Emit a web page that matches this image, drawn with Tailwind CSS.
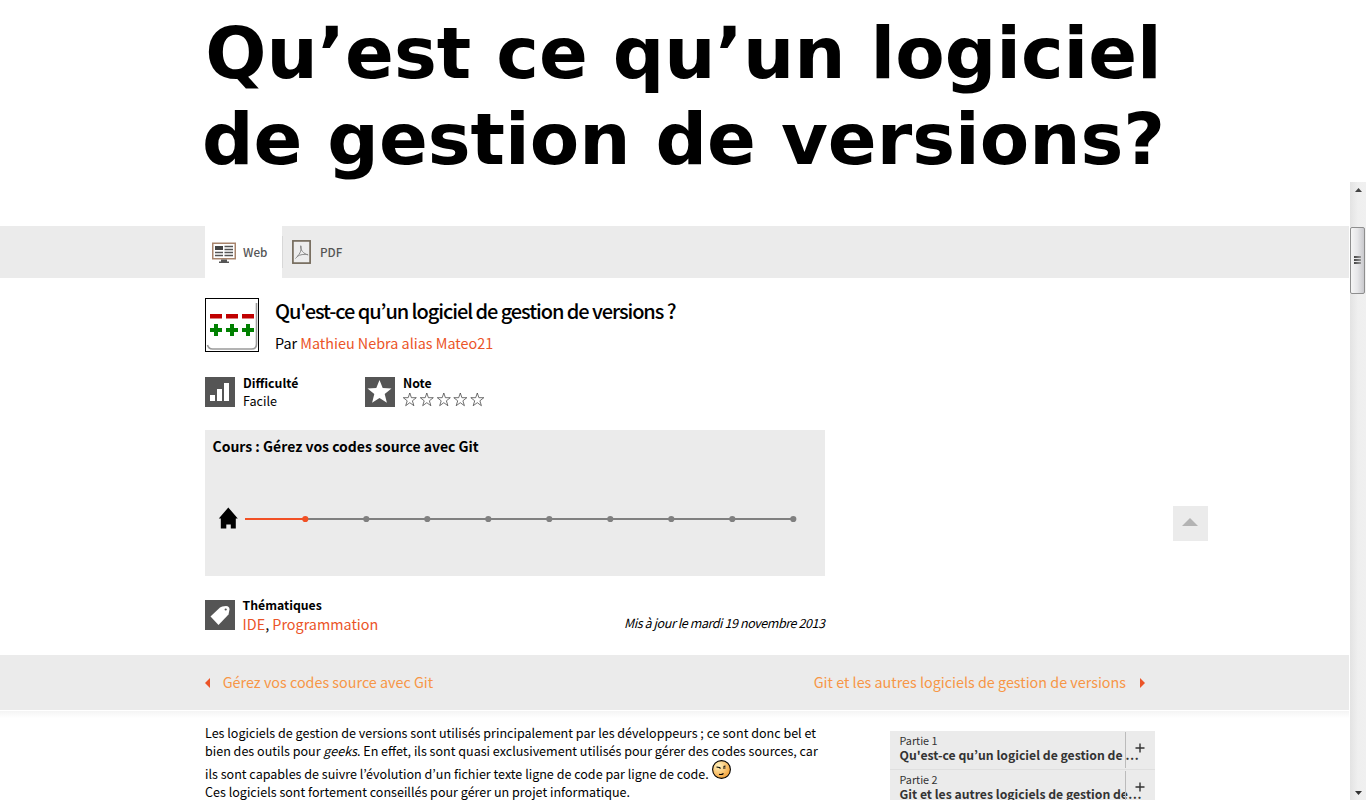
<!DOCTYPE html>
<html lang="fr">
<head>
<meta charset="utf-8">
<title>Qu’est ce qu’un logiciel de gestion de versions?</title>
<script src="https://cdn.jsdelivr.net/npm/@tailwindcss/browser@4"></script>
</head>
<body class="h-[800px] overflow-hidden bg-white text-black font-['Noto_Sans_CJK_KR','Noto_Sans',sans-serif]">
<h1 class="h-[182px] pt-[10px] pl-[1px] text-center font-['DejaVu_Sans',sans-serif] text-[72px] leading-[86px] font-bold whitespace-nowrap">Qu’est ce qu’un logiciel<br>de gestion de versions?</h1>
<div class="flex h-[618px]">
  <div class="w-[1349px] overflow-hidden">
    <nav class="mt-[44px] flex h-[52px] bg-[#ebebeb] pl-[205px] text-[11.7px] font-medium text-[#555]">
      <div class="flex w-[77px] items-center bg-white pl-[7px]">
        <svg class="h-[22px] w-[24px]" viewBox="0 0 24 22"><rect x=".75" y="2.250" width="22.5" height="15.5" fill="#fff" stroke="#a8846c" stroke-width="1.5"/><path d="M3 5h8v4H3z" fill="#444"/><path d="M12.500 5.500H21M12.500 8.500H21M3 11.500h8M12.500 11.500H21M3 14.500h8M12.500 14.500H21" stroke="#555" stroke-width="1.300"/><path d="M9 18.500h6v2h2V22H7v-1.500h2z" fill="#555"/></svg>
        <span class="ml-[7px]">Web</span>
      </div>
      <div class="mt-[10px] flex h-[32px] items-center pl-[9px] shadow-[inset_1px_0_#d8d8d8]">
        <svg class="ml-px h-[24px] w-[19px]" viewBox="0 0 19 24"><rect x=".9" y=".9" width="17.2" height="22.2" fill="#ededed" stroke="#756b5c" stroke-width="1.700"/><path d="M8.700 5.500c-1 4 3 8.500 7.500 9.500M9 6c1 5-2 9-5.500 12.500M5 16.500c3-2 7-2.500 11-2" fill="none" stroke="#8a8a8a" stroke-width="1"/></svg>
        <span class="ml-[9px]">PDF</span>
      </div>
    </nav>
    <header class="ml-[205px] w-[621px] pt-[20px]">
      <div class="flex">
        <svg class="h-[54px] w-[54px]" viewBox="0 0 54 54"><rect x=".5" y=".5" width="53" height="53" fill="#fff" stroke="#000"/><path d="M2.500 47q1 4 5 4h39q5 0 5-5V5" fill="none" stroke="#9a9a9a" stroke-width="1.600"/><path d="M5 16h12v4.500H5zM21 16h12v4.500H21zM37 16h12v4.500H37z" fill="#c00000"/><path d="M5 32h12M11 26v12M21 32h12M27 26v12M37 32h12M43 26v12" stroke="#008000" stroke-width="4"/></svg>
        <div class="ml-4 whitespace-nowrap">
          <h2 class="pt-px text-[20px] leading-[24px] font-medium tracking-[-1.07px]">Qu'est-ce qu’un logiciel de gestion de versions ?</h2>
          <p class="mt-[11px] text-[14.38px] leading-[18px]">Par <a class="text-[#eb5428]">Mathieu Nebra alias Mateo21</a></p>
        </div>
      </div>
      <div class="mt-[25px] flex h-[30px] text-[12.3px] leading-[18px]">
        <svg class="h-[30px] w-[30px] bg-[#555]" viewBox="0 0 30 30"><path d="M5 18h5v6H5zM12 12h5v12h-5zM19 6h5v18h-5z" fill="#fff"/></svg>
        <div class="-mt-[3px] ml-2 w-[122px]"><p class="font-bold">Difficulté</p><p class="text-[12.6px]">Facile</p></div>
        <svg class="h-[30px] w-[30px] bg-[#555]" viewBox="0 0 30 30"><path d="M14.500 3l3.200 8 8.800.6-6.800 5.500 2.200 8.700-7.400-4.800-7.400 4.800 2.200-8.700L2.500 11.600l8.800-.6z" fill="#fff"/></svg>
        <div class="-mt-[3px] ml-2"><p class="font-bold">Note</p>
          <svg class="h-[15px] w-[84px]" viewBox="0 0 84 15"><defs><path id="star" d="M6.800 1l1.600 4.700h4.900L9.400 8.800l1.500 4.900-4.100-3-4.100 3 1.500-4.900L.3 5.700h4.900z" fill="#fff" stroke="#333" stroke-width=".7"/></defs><use href="#star"/><use href="#star" x="17"/><use href="#star" x="34"/><use href="#star" x="50.500"/><use href="#star" x="67.500"/></svg>
        </div>
      </div>
      <section class="mt-[23px] h-[146px] w-[620px] bg-[#ebebeb] pt-[7px]">
        <h3 class="pl-[7.500px] text-[13.98px] leading-[18px] font-bold">Cours : Gérez vos codes source avec Git</h3>
        <svg class="mt-[45px] h-[40px] w-[620px]" viewBox="0 0 620 40"><path d="M23.300 7.500l9.500 11h-2V28.500h-5v-4h-4.500v4h-5.500v-10h-2z" fill="#000"/><path d="M100 19h488" stroke="#808080" stroke-width="2"/><path d="M40 19h60" stroke="#f15025" stroke-width="2"/><circle cx="100.300" cy="19" r="3.100" fill="#f15025"/><g fill="#808080"><circle cx="161.300" cy="19" r="3.100"/><circle cx="222.300" cy="19" r="3.100"/><circle cx="283.300" cy="19" r="3.100"/><circle cx="344.300" cy="19" r="3.100"/><circle cx="405.300" cy="19" r="3.100"/><circle cx="466.300" cy="19" r="3.100"/><circle cx="527.300" cy="19" r="3.100"/><circle cx="588.300" cy="19" r="3.100"/></g></svg>
      </section>
      <div class="mt-[24px] flex h-[30px]">
        <svg class="h-[30px] w-[30px] bg-[#555]" viewBox="0 0 30 30"><path d="M5.500 16.500L15 7.500q1.500-1.300 6-1.500 3.500 0 3.500 3.500l-1 5L13.500 25z" fill="#fff"/><circle cx="20.700" cy="9.500" r="1.100" fill="#555"/></svg>
        <div class="-mt-[4px] ml-[7.600px]"><p class="text-[12.25px] leading-[18px] font-bold">Thématiques</p><p class="mt-px text-[14.36px] leading-[18px]"><a class="text-[#eb5428]">IDE</a>, <a class="text-[#eb5428]">Programmation</a></p></div>
        <p class="mt-[14px] mr-[1.500px] ml-auto text-[12.5px] leading-[18px] tracking-[-0.420px] italic">Mis à jour le mardi 19 novembre 2013</p>
      </div>
    </header>
    <nav class="mt-[25px] flex h-[55px] items-center bg-[#ebebeb] pr-[204px] pl-[205px] text-[14.350px] text-[#f79646]">
      <svg class="h-[10px] w-[5px]" viewBox="0 0 5 10"><path d="M5 0v10L0 5z" fill="#eb5428"/></svg>
      <a class="-mt-[2px] ml-[12.700px] leading-[20px]">Gérez vos codes source avec Git</a>
      <a class="-mt-[2px] ml-auto leading-[20px]">Git et les autres logiciels de gestion de versions</a>
      <svg class="ml-[14px] h-[10px] w-[5px]" viewBox="0 0 5 10"><path d="M0 0v10l5-5z" fill="#eb5428"/></svg>
    </nav>
    <div class="mt-px h-[7px] bg-linear-to-b from-[#f4f4f4] to-white"></div>
    <div class="flex pl-[205px]">
      <main class="mt-[6px] w-[685px] text-[12.560px] leading-[18px] whitespace-nowrap">
        <p>Les logiciels de gestion de versions sont utilisés principalement par les développeurs ; ce sont donc bel et</p>
        <p>bien des outils pour <em>geeks</em>. En effet, ils sont quasi exclusivement utilisés pour gérer des codes sources, car</p>
        <p class="mt-[5px] flex h-[18px]">ils sont capables de suivre l’évolution d’un fichier texte ligne de code par ligne de code.
          <svg class="-mt-[5px] ml-[3px] h-[19px] w-[19px]" viewBox="0 0 19 19"><defs><radialGradient id="face" cx=".35" cy=".3" r=".75"><stop offset="0" stop-color="#fff3c0"/><stop offset="1" stop-color="#f5a035"/></radialGradient></defs><circle cx="9.500" cy="9.500" r="8.900" fill="url(#face)" stroke="#000" stroke-width="1.100"/><path d="M4.500 7l3 .5 1 1M11 8h2.500M11.500 6.500l2-.5M7 14.300q2.500.8 4.500-.8" fill="none" stroke="#000" stroke-width="1.100"/></svg></p>
        <p>Ces logiciels sont fortement conseillés pour gérer un projet informatique.</p>
      </main>
      <aside class="mt-[13px] w-[265px] text-[#333] whitespace-nowrap">
        <div class="relative h-[39px] border-b-[1px] border-[#dfdfdf] bg-[#ebebeb] pt-[3px] pl-[9.500px]"><p class="-mt-px text-[10.8px] leading-[14px]">Partie 1</p><p class="mt-px text-[12.23px] leading-[14px] font-bold">Qu'est-ce qu’un logiciel de gestion de …</p><i class="absolute top-px right-[29px] h-[36px] w-px bg-[#bbb]"></i><svg class="absolute top-[12px] right-[10px] h-[10px] w-[10px]" viewBox="0 0 10 10"><path d="M.5 5h9M5 .5v9" stroke="#333" stroke-width="1.400"/></svg></div>
        <div class="relative h-[39px] bg-[#ebebeb] pt-[3px] pl-[9.500px]"><p class="-mt-px text-[10.8px] leading-[14px]">Partie 2</p><p class="mt-px text-[12.23px] leading-[14px] font-bold">Git et les autres logiciels de gestion de…</p><i class="absolute top-px right-[29px] h-[36px] w-px bg-[#bbb]"></i><svg class="absolute top-[12px] right-[10px] h-[10px] w-[10px]" viewBox="0 0 10 10"><path d="M.5 5h9M5 .5v9" stroke="#333" stroke-width="1.400"/></svg></div>
      </aside>
    </div>
  </div>
  <div class="ml-px flex w-[16px] flex-col bg-linear-to-r from-[#e3e3e3] via-[#efefef] to-[#f0f0f0]">
    <svg class="mt-[6px] ml-[5px] h-[4px] w-[7px]" viewBox="0 0 7 4"><path d="M3.500 0L7 4H0z" fill="#444"/></svg>
    <div class="mt-[35px] flex h-[67px] w-[15px] flex-col items-center justify-center gap-[1px] rounded-[2px] border border-[#8e8e8e] bg-linear-to-r from-[#f5f5f5] via-[#e6e6e8] to-[#c9c9cd] pb-[2px]"><i class="h-[2px] w-[7px] bg-linear-to-r from-[#444] to-[#999]"></i><i class="h-[2px] w-[7px] bg-linear-to-r from-[#444] to-[#999]"></i><i class="h-[2px] w-[7px] bg-linear-to-r from-[#444] to-[#999]"></i></div>
    <svg class="mt-auto mb-[5px] ml-[5px] h-[4px] w-[7px]" viewBox="0 0 7 4"><path d="M3.500 4L7 0H0z" fill="#333"/></svg>
  </div>
</div>
<button class="absolute top-[506px] left-[1173px] h-[35px] w-[35px] bg-[#ebebeb]" aria-label="Haut de page"><svg class="-mt-[4px] ml-[9px] h-[8px] w-[16px]" viewBox="0 0 16 8"><path d="M8 0l8 8H0z" fill="#b3b3b3"/></svg></button>
</body>
</html>
